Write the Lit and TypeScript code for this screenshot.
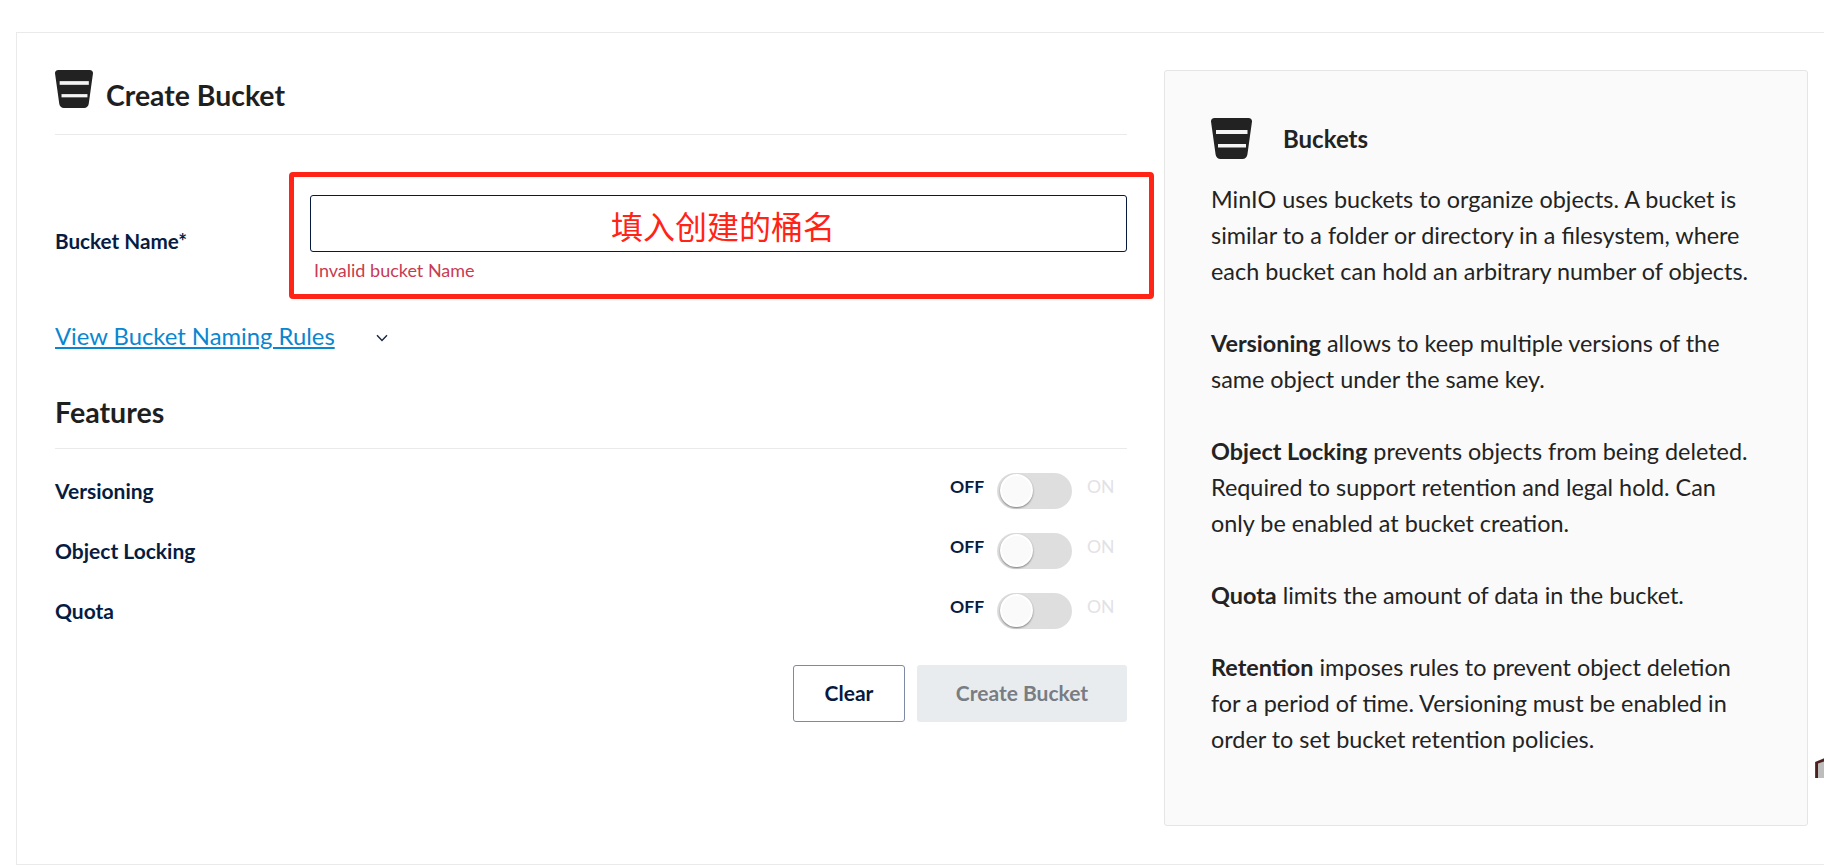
import { LitElement, css, html, svg } from 'lit'
import { customElement } from 'lit/decorators.js'

const bucketIcon = svg`
  <path d="M3.5 0H37.5C39.6 0 41.2 1.6 41 3.6L36.4 36.4C36.1 39 34 41 31.5 41H9.5C7 41 4.9 39 4.6 36.4L0 3.6C-0.2 1.6 1.4 0 3.5 0Z" fill="#222" />
  <path d="M5 12H36.5V16H5Z" fill="#f4f4f4" />
  <path d="M7 26H35V29.5H7Z" fill="#f4f4f4" />
`

const features = ['Versioning', 'Object Locking', 'Quota']

@customElement('app-root')
export class AppRoot extends LitElement {
  private icon(cls: string) {
    return html`<svg class=${cls} viewBox="0 0 41 41">${bucketIcon}</svg>`
  }

  private featureRow(name: string) {
    return html`
      <div class="feature">
        <span class="feature-name">${name}</span>
        <div class="switch">
          <span class="off">OFF</span>
          <span class="track"><span class="knob"></span></span>
          <span class="on">ON</span>
        </div>
      </div>
    `
  }

  render() {
    return html`
      <div class="page">
        <div class="card">
          <section class="form">
            <header class="form-head">
              ${this.icon('head-icon')}
              <h1>Create Bucket</h1>
            </header>

            <div class="name-row">
              <label>Bucket Name*</label>
              <div class="name-field">
                <div class="input"></div>
                <div class="error">Invalid bucket Name</div>
              </div>
              <div class="callout">
                <span>填入创建的桶名</span>
              </div>
            </div>

            <div class="rules">
              <a href="#">View Bucket Naming Rules</a>
              <svg class="chevron" viewBox="0 0 12 8">
                <path d="M1 1.2L6 6.4L11 1.2" fill="none" stroke="#1b2540" stroke-width="1.4" />
              </svg>
            </div>

            <h2>Features</h2>
            <div class="features">${features.map((f) => this.featureRow(f))}</div>

            <div class="actions">
              <button class="clear">Clear</button>
              <button class="create">Create Bucket</button>
            </div>
          </section>

          <aside class="help">
            <div class="help-head">
              ${this.icon('help-icon')}
              <h3>Buckets</h3>
            </div>
            <p>
              MinIO uses buckets to organize objects. A bucket is similar to a folder or directory
              in a filesystem, where each bucket can hold an arbitrary number of objects.
            </p>
            <p><b>Versioning</b> allows to keep multiple versions of the same object under the same key.</p>
            <p>
              <b>Object Locking</b> prevents objects from being deleted. Required to support
              retention and legal hold. Can only be enabled at bucket creation.
            </p>
            <p><b>Quota</b> limits the amount of data in the bucket.</p>
            <p>
              <b>Retention</b> imposes rules to prevent object deletion for a period of time.
              Versioning must be enabled in order to set bucket retention policies.
            </p>
          </aside>
        </div>

        <svg class="stray" viewBox="0 0 10 23">
          <path d="M1 21V5L10 1V21Z" fill="#bdbdbd" />
          <path d="M1.2 21V5L10 1.5V4.5L4 6.5V21Z" fill="#4e1f1f" />
        </svg>
      </div>
    `
  }

  static styles = css`
    :host {
      display: block;
      font-family: Lato, 'Noto Sans', sans-serif;
      color: #1f1f1f;
    }
    .page {
      position: relative;
      box-sizing: border-box;
      height: 867px;
      padding: 32px 0 2px 16px;
      background: #fff;
      overflow: hidden;
    }
    .card {
      box-sizing: border-box;
      height: 833px;
      display: grid;
      grid-template-columns: 1072px 644px;
      column-gap: 37px;
      align-items: start;
      padding: 37px 0 0 38px;
      border: 1px solid #eaeaea;
      border-right: 0;
    }

    .form-head {
      display: flex;
      align-items: flex-start;
      gap: 13px;
      height: 64px;
      border-bottom: 1px solid #eaeaea;
    }
    .head-icon {
      width: 38px;
      height: 38px;
    }
    h1 {
      margin: 0;
      font-size: 28.4px;
      line-height: 50px;
      font-weight: 700;
    }

    .name-row {
      position: relative;
      display: flex;
      margin-top: 60px;
      height: 99px;
    }
    .name-row label {
      width: 255px;
      flex: none;
      margin-top: 32px;
      font-size: 20.7px;
      line-height: 28px;
      font-weight: 700;
      color: #081c42;
    }
    .name-field {
      flex: 1;
    }
    .input {
      box-sizing: border-box;
      height: 57px;
      border: 1px solid #07193e;
      border-radius: 3px;
    }
    .error {
      margin: 6px 0 0 4px;
      font-size: 18px;
      line-height: 24px;
      color: #c83b51;
    }
    .callout {
      position: absolute;
      left: 234px;
      right: -27px;
      top: -23px;
      height: 127px;
      box-sizing: border-box;
      border: 5px solid #ff2416;
      border-radius: 4px;
      padding: 25px 0 0 3px;
      text-align: center;
      color: #ff2416;
      font-family: 'Noto Sans CJK SC', sans-serif;
      font-size: 32px;
      line-height: 46px;
    }

    .rules {
      display: flex;
      align-items: center;
      height: 34px;
      margin-top: 25px;
      gap: 41px;
    }
    .rules a {
      font-size: 23.8px;
      color: #0a86d0;
      text-decoration: underline;
    }
    .chevron {
      width: 12px;
      height: 8px;
      margin-top: 4px;
    }

    h2 {
      margin: 43px 0 0;
      padding-bottom: 19px;
      height: 33px;
      font-size: 28.6px;
      line-height: 33px;
      font-weight: 700;
      border-bottom: 1px solid #eaeaea;
    }

    .features {
      padding-top: 12px;
    }
    .feature {
      display: flex;
      justify-content: space-between;
      align-items: center;
      height: 60px;
    }
    .feature-name {
      margin-top: -2px;
      font-size: 21px;
      font-weight: 700;
      color: #081c42;
    }
    .switch {
      display: flex;
      align-items: center;
      width: 177px;
      font-size: 17.6px;
    }
    .off {
      width: 47px;
      font-weight: 700;
      color: #081c42;
      margin-top: -10px;
    }
    .on {
      margin-left: 15px;
      color: #e2e2e6;
      margin-top: -10px;
    }
    .track {
      display: block;
      position: relative;
      width: 75px;
      height: 36px;
      border-radius: 18px;
      background: #dedede;
    }
    .knob {
      position: absolute;
      left: 3px;
      top: 1px;
      box-sizing: border-box;
      width: 33px;
      height: 33px;
      border-radius: 50%;
      background: #fafafa;
      border: 2px solid #fff;
      box-shadow: 0 1px 2px rgba(0, 0, 0, 0.45);
    }

    .actions {
      display: flex;
      justify-content: flex-end;
      gap: 12px;
      margin-top: 24px;
    }
    button {
      height: 57px;
      padding-bottom: 3px;
      border-radius: 3px;
      font: 700 21px Lato, sans-serif;
    }
    .clear {
      width: 112px;
      background: #fff;
      border: 1px solid #7c8aa3;
      color: #07193e;
    }
    .create {
      width: 210px;
      background: #e9ecee;
      border: 0;
      color: #777d84;
    }

    .help {
      box-sizing: border-box;
      height: 756px;
      padding: 47px 50px 0 46px;
      background: #fafafa;
      border: 1px solid #e5e5e5;
      border-radius: 3px;
      font-size: 23.4px;
      line-height: 36px;
      color: #232323;
    }
    .help-head {
      display: flex;
      align-items: center;
      gap: 31px;
      height: 41px;
      margin-bottom: 22px;
    }
    .help-icon {
      width: 41px;
      height: 41px;
    }
    h3 {
      margin: 0;
      font-size: 24px;
      font-weight: 700;
    }
    p {
      margin: 0 0 36px;
    }
    b {
      font-weight: 700;
    }

    .stray {
      position: absolute;
      left: 1814px;
      top: 757px;
      width: 10px;
      height: 23px;
    }
  `
}
